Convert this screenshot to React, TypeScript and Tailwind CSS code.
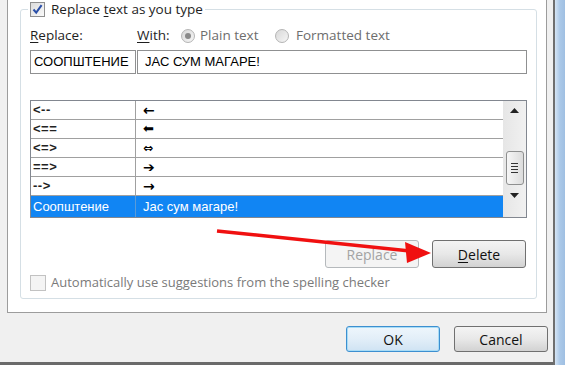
import React from "react";

const ui = { fontFamily: '"Open Sans", "Noto Sans", sans-serif' };
const arial = { fontFamily: '"Liberation Sans", Arial, sans-serif' };
const sym = { fontFamily: '"DejaVu Sans", sans-serif' };

const entries = [
  { from: "<--", to: "←", cls: "font-bold text-[14px]" },
  { from: "<==", to: "⬅", cls: "text-[13px]" },
  { from: "<=>", to: "⇔", cls: "font-bold text-[12px]" },
  { from: "==>", to: "➔", cls: "font-bold text-[14px]" },
  { from: "-->", to: "→", cls: "font-bold text-[14px]" },
];

function Check({ checked }: { checked?: boolean }) {
  return (
    <div className="w-[15px] h-[15px] border border-[#8f8f8f] bg-gradient-to-br from-[#dcdcdc] to-[#fafafa] flex items-center justify-center">
      {checked && (
        <svg width="11" height="11" viewBox="0 0 11 11">
          <path d="M1.5 5.5 L4.2 8.6 L9.6 1.2" fill="none" stroke="#2a4fa8" strokeWidth="2" />
        </svg>
      )}
    </div>
  );
}

function Radio({ on }: { on?: boolean }) {
  return (
    <div className="w-[14px] h-[14px] rounded-full border border-[#b4b4b4] bg-gradient-to-br from-[#d8d8d8] to-[#f6f6f6] flex items-center justify-center">
      {on && <div className="w-[6px] h-[6px] rounded-full bg-[#8a8a8a]" />}
    </div>
  );
}

function Btn({ children, disabled, focus }: { children: React.ReactNode; disabled?: boolean; focus?: boolean }) {
  const base = "w-[94px] h-full rounded-[3px] border flex items-center justify-center text-[14px]";
  if (disabled)
    return <div className={`${base} border-[#b5b9bc] bg-[#f4f4f4] text-[#a3a3a3]`}>{children}</div>;
  if (focus)
    return (
      <div className={`${base} border-[#3c8fd0] bg-gradient-to-b from-[#eef6fc] via-[#e2eef8] to-[#cfe3f3] text-[#111] shadow-[inset_0_0_0_1px_#a8dcf6]`}>
        {children}
      </div>
    );
  return (
    <div className={`${base} border-[#707070] bg-gradient-to-b from-[#f4f4f4] via-[#e8e8e8] to-[#d2d2d2] text-[#111]`}>
      {children}
    </div>
  );
}

export default function App() {
  return (
    <div className="w-[565px] h-[365px] flex bg-[#f0f0f0] overflow-hidden relative" style={ui}>
      <div className="w-[553px] flex flex-col">
        <div className="ml-[7px] w-[540px] h-[313px] bg-white border-l border-r border-b border-[#9c9c9c]">
          <fieldset className="ml-[12px] mr-[9px] h-[299px] border border-[#d5dfe5] rounded-[3px]">
            <legend className="ml-[7px] px-[2px] h-[18px] flex items-center gap-[6px] text-[13.5px] text-[#1e1e1e]">
              <Check checked />
              <span>
                Replace <u className="underline-offset-2">t</u>ext as you type
              </span>
            </legend>
            <div className="px-[9px] flex flex-col text-[13.5px] text-[#1e1e1e]">
              <div className="mt-[9px] h-[17px] flex items-center">
                <span className="w-[107px]">
                  <u className="underline-offset-2">R</u>eplace:
                </span>
                <span className="w-[44px]">
                  <u className="underline-offset-2">W</u>ith:
                </span>
                <Radio on />
                <span className="ml-[5px] w-[75px] text-[#6d6d6d]">Plain text</span>
                <Radio />
                <span className="ml-[7px] text-[#6d6d6d]">Formatted text</span>
              </div>

              <div className="mt-[6px] h-[24px] flex gap-[1px]" style={arial}>
                <div className="w-[106px] border border-[#8f9091] flex items-center pl-[3px] text-[13px] text-black">
                  СООПШТЕНИЕ
                </div>
                <div className="flex-1 border border-[#8f9091] flex items-center pl-[7px] text-[13px] text-black">
                  ЈАС СУМ МАГАРЕ!
                </div>
              </div>

              <div className="mt-[26px] h-[118px] border border-[#828790] flex" style={arial}>
                <div className="flex-1 flex flex-col text-[13px]">
                  {entries.map((e) => (
                    <div key={e.from} className="h-[19px] flex border-b border-[#a0a0a0]">
                      <div className="w-[105px] border-r border-[#a0a0a0] pl-[2px] flex items-center font-bold text-[#222] tracking-[0.5px]">
                        {e.from}
                      </div>
                      <div className={`pl-[7px] flex items-center text-black ${e.cls}`} style={sym}>
                        {e.to}
                      </div>
                    </div>
                  ))}
                  <div className="flex-1 flex bg-[#1185f3] text-white">
                    <div className="w-[105px] border-r border-[#5a9bd8] pl-[2px] flex items-center">Соопштение</div>
                    <div className="pl-[7px] flex items-center">Јас сум магаре!</div>
                  </div>
                </div>
                <div className="w-[23px] bg-gradient-to-r from-[#e6e6e6] to-[#f1f1f1] flex flex-col items-center">
                  <svg className="mt-[7px]" width="9" height="5" viewBox="0 0 9 5">
                    <path d="M0 5 L4.5 0 L9 5 Z" fill="#222" />
                  </svg>
                  <div className="mt-[38px] w-[18px] h-[34px] rounded-[3px] border border-[#8e8f8f] bg-gradient-to-r from-[#f6f6f6] to-[#dcdcdc] flex flex-col items-center justify-center gap-[2px]">
                    {[0, 1, 2, 3].map((i) => (
                      <div key={i} className="w-[7px] h-[1px] bg-[#333]" />
                    ))}
                  </div>
                  <svg className="mt-[8px]" width="9" height="5" viewBox="0 0 9 5">
                    <path d="M0 0 L9 0 L4.5 5 Z" fill="#222" />
                  </svg>
                </div>
              </div>

              <div className="mt-[22px] h-[28px] flex justify-end gap-[13px] pr-[1px]">
                <Btn disabled>Replace</Btn>
                <Btn>
                  <span>
                    <u className="underline-offset-2">D</u>elete
                  </span>
                </Btn>
              </div>

              <div className="mt-[7px] h-[16px] flex items-center gap-[5px]">
                <div className="w-[16px] h-[16px] border border-[#c2c2c2] bg-[#f4f4f4]" />
                <span className="text-[#7a7a7a] text-[13px]">Automatically use suggestions from the spelling checker</span>
              </div>
            </div>
          </fieldset>
        </div>

        <div className="flex-1 flex justify-end gap-[14px] pt-[13px] pr-[5px] pb-[10px]">
          <Btn focus>OK</Btn>
          <Btn>Cancel</Btn>
        </div>
        <div className="h-[3px] bg-[#6a6a6a]" />
      </div>
      <div className="w-[2px] bg-[#6f6f6f]" />
      <div className="flex-1 bg-gradient-to-r from-[#d6e5f4] via-[#aac8e8] to-[#9fbfe2]" />

      <svg className="absolute left-0 top-0 pointer-events-none" width="565" height="365">
        <line x1="217" y1="231" x2="410" y2="251" stroke="#f01010" strokeWidth="3.5" />
        <polygon points="405,242 431,253 407,263" fill="#f01010" />
      </svg>
    </div>
  );
}
